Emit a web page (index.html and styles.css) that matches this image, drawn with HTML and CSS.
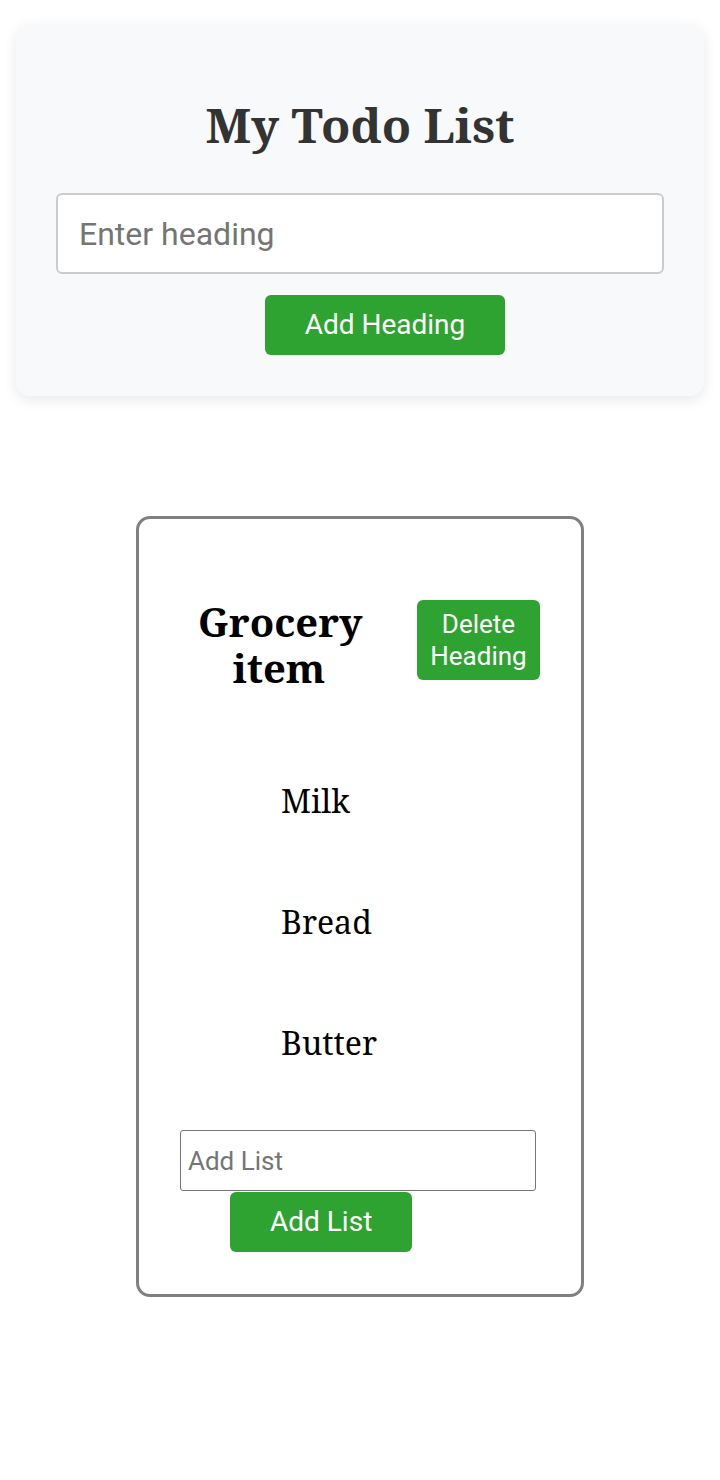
FILE: index.html
```html
<!DOCTYPE html>
<html lang="en">
<head>
<meta charset="utf-8">
<title>My Todo List</title>
<link rel="stylesheet" href="styles.css">
</head>
<body>
  <section class="panel">
    <h1 class="title">My Todo List</h1>
    <input class="heading-input" type="text" placeholder="Enter heading">
    <div class="panel-actions">
      <button class="btn btn-add-heading" type="button">Add Heading</button>
    </div>
  </section>

  <section class="list-card">
    <div class="list-header">
      <h2 class="list-title">Grocery item</h2>
      <button class="btn btn-delete" type="button">Delete Heading</button>
    </div>
    <ul class="items">
      <li class="item">Milk</li>
      <li class="item">Bread</li>
      <li class="item">Butter</li>
    </ul>
    <div class="add-list">
      <input class="list-input" type="text" placeholder="Add List">
      <button class="btn btn-add-list" type="button">Add List</button>
    </div>
  </section>
</body>
</html>
```

FILE: styles.css
```css
* {
  box-sizing: border-box;
}

body {
  margin: 0;
  background: #ffffff;
  font-family: "Noto Serif", serif;
  color: #000;
}

.panel {
  margin: 24px 16px 0;
  padding: 40px 40px 41px;
  background: #f8f9fa;
  border-radius: 14px;
  box-shadow: 0 4px 14px rgba(0, 0, 0, 0.09);
}

.title {
  margin: 28px 0 36px;
  font-size: 48px;
  font-weight: 700;
  text-align: center;
  color: #333333;
}

.heading-input {
  display: block;
  width: 100%;
  height: 81px;
  padding: 0 21px;
  border: 2px solid #cccccc;
  border-radius: 6px;
  background: #ffffff;
  font-family: Roboto, sans-serif;
  font-size: 32px;
  color: #333;
}

.heading-input::placeholder,
.list-input::placeholder {
  color: #757575;
}

.panel-actions {
  display: flex;
  justify-content: center;
  margin-top: 21px;
}

.btn {
  border: none;
  border-radius: 6px;
  background: #2fa331;
  color: #ffffff;
  font-family: Roboto, sans-serif;
  font-size: 28px;
  line-height: 34px;
  padding: 13px 40px;
  cursor: pointer;
}

.btn-add-heading {
  margin-left: 50px;
}

.list-card {
  width: 448px;
  margin: 120px auto 0;
  padding: 0 41px 42px 0;
  border: 3px solid #808080;
  border-radius: 14px;
  background: #ffffff;
}

.list-header {
  display: flex;
  align-items: flex-start;
  padding: 80px 0 0 59px;
  gap: 57px;
}

.list-title {
  flex: 1 1 0;
  min-width: 0;
  margin: 0;
  font-size: 40px;
  line-height: 46px;
  font-weight: 700;
  text-align: center;
}

.btn-delete {
  flex: 0 0 123px;
  width: 123px;
  margin-top: 1px;
  padding: 8px 10px;
  font-size: 26px;
  line-height: 32px;
}

.items {
  list-style: none;
  margin: 0;
  padding: 10px 0 0 142px;
}

.item {
  margin-top: 78px;
  font-size: 32px;
}

.add-list {
  padding: 66px 0 0 41px;
}

.list-input {
  display: block;
  width: 356px;
  height: 61px;
  padding: 0 7px;
  border: 1px solid #767676;
  border-radius: 3px;
  font-family: Roboto, sans-serif;
  font-size: 26px;
  color: #333;
}

.btn-add-list {
  margin: 1px 0 0 50px;
}
```
